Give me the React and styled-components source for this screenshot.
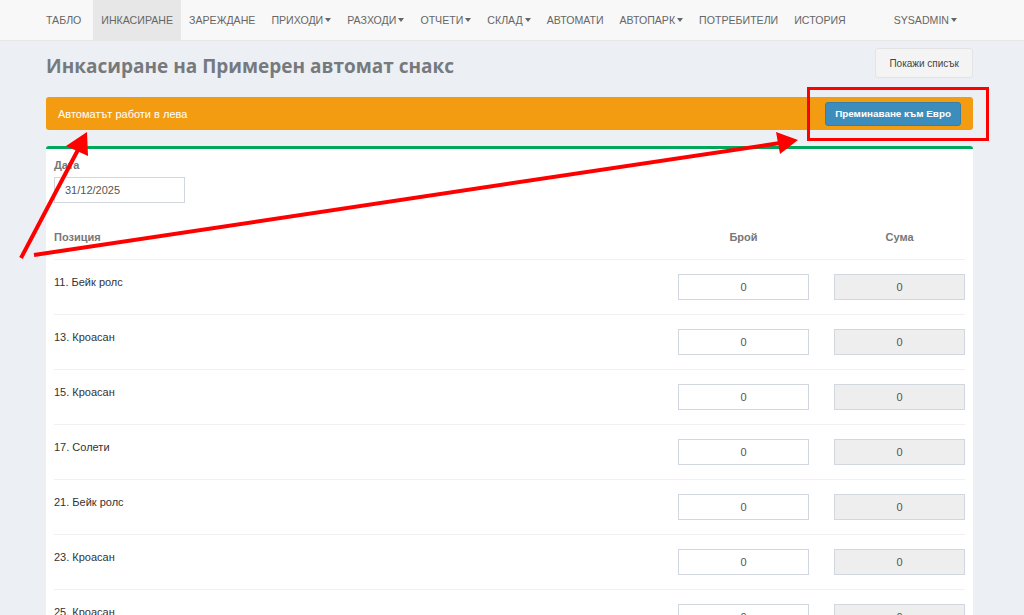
import React from "react";
import styled, { createGlobalStyle } from "styled-components";

const GlobalStyle = createGlobalStyle`
  html, body {
    margin: 0;
    padding: 0;
    background: #ecf0f5;
    font-family: "Liberation Sans", Arial, sans-serif;
    font-size: 11px;
    color: #333;
  }
  * { box-sizing: border-box; }
`;

const Page = styled.div`
  position: relative;
  height: 100vh;
  overflow: hidden;
  background: #ecf0f5;
`;

const Navbar = styled.nav`
  height: 41px;
  background: #f8f8f8;
  border-bottom: 1px solid #e7e7e7;
  display: flex;
  align-items: stretch;
  justify-content: space-between;
  padding: 0 59px 0 38px;
`;

const NavGroup = styled.ul`
  display: flex;
  align-items: stretch;
  list-style: none;
  margin: 0;
  padding: 0;
`;

const NavItem = styled.li`
  display: flex;
  align-items: center;
  padding: 0 8px;
  font-size: 10.6px;
  text-transform: uppercase;
  color: #666;
  background: ${(p) => (p.$active ? "#e7e7e7" : "transparent")};
  margin-right: ${(p) => (p.$wide ? "4px" : "0")};
  white-space: nowrap;
  cursor: pointer;
`;

const Caret = styled.span`
  display: inline-block;
  width: 0;
  height: 0;
  margin-left: 2px;
  border-top: 4px solid #666;
  border-left: 3.5px solid transparent;
  border-right: 3.5px solid transparent;
`;

const Content = styled.main`
  padding: 7px 51px 0 46px;
`;

const HeaderRow = styled.div`
  display: flex;
  justify-content: space-between;
  align-items: flex-start;
`;

const Title = styled.h1`
  margin: 7px 0 0;
  font-family: "Open Sans", "Liberation Sans", sans-serif;
  font-weight: 700;
  font-size: 19px;
  line-height: 23px;
  color: #777a7d;
`;

const DefaultButton = styled.button`
  height: 30px;
  padding: 0 13px;
  background: #f4f4f4;
  border: 1px solid #e3e3e3;
  border-radius: 3px;
  color: #444;
  font-family: "Liberation Sans", Arial, sans-serif;
  font-size: 10px;
`;

const Alert = styled.div`
  margin-top: 19px;
  height: 33px;
  background: #f39c12;
  border-radius: 3px;
  display: flex;
  align-items: center;
  justify-content: space-between;
  padding: 0 12px;
  color: #fff;
  font-size: 11px;
`;

const PrimaryButton = styled.button`
  height: 24px;
  padding: 0 9px;
  background: #3c8dbc;
  border: 1px solid #367fa9;
  border-radius: 3px;
  color: #fff;
  font-family: "Liberation Sans", Arial, sans-serif;
  font-weight: 700;
  font-size: 9.9px;
`;

const Box = styled.section`
  margin-top: 16px;
  background: #fff;
  border-top: 3px solid #00a65a;
  border-radius: 3px;
  padding: 8px 8px 0;
`;

const Label = styled.label`
  display: block;
  font-weight: 700;
  font-size: 11px;
  line-height: 16px;
  color: #777;
  margin-bottom: 4px;
`;

const Field = styled.input`
  display: block;
  width: 131px;
  height: 26px;
  padding: 0 10px;
  border: 1px solid #d2d6de;
  border-radius: 0;
  font-family: "Liberation Sans", Arial, sans-serif;
  font-size: 11px;
  color: #555;
  text-align: ${(p) => (p.$center ? "center" : "left")};
  background: ${(p) => (p.readOnly ? "#eee" : "#fff")};
  outline: none;
`;

const Table = styled.div`
  margin-top: 18px;
`;

const Row = styled.div`
  display: grid;
  grid-template-columns: 1fr 131px 131px;
  column-gap: 25px;
  padding: ${(p) => (p.$head ? "8px 0 14px" : "14px 0")};
  border-top: ${(p) => (p.$head ? "none" : "1px solid #f1f1f1")};
`;

const HeadCell = styled.div`
  font-weight: 700;
  font-size: 11px;
  line-height: 16px;
  color: #777;
  text-align: ${(p) => (p.$center ? "center" : "left")};
`;

const NameCell = styled.div`
  font-size: 11px;
  line-height: 16px;
  color: #333;
`;

const Overlay = styled.svg`
  position: absolute;
  inset: 0;
  width: 100%;
  height: 100%;
  pointer-events: none;
`;

const navLeft = [
  { label: "Табло", wide: true },
  { label: "Инкасиране", active: true },
  { label: "Зареждане" },
  { label: "Приходи", menu: true },
  { label: "Разходи", menu: true },
  { label: "Отчети", menu: true },
  { label: "Склад", menu: true },
  { label: "Автомати" },
  { label: "Автопарк", menu: true },
  { label: "Потребители" },
  { label: "История" },
];

const products = [
  "11. Бейк ролс",
  "13. Кроасан",
  "15. Кроасан",
  "17. Солети",
  "21. Бейк ролс",
  "23. Кроасан",
  "25. Кроасан",
  "27. Солети",
];

export default function App() {
  return (
    <Page>
      <GlobalStyle />
      <Navbar>
        <NavGroup>
          {navLeft.map((item) => (
            <NavItem key={item.label} $active={item.active} $wide={item.wide}>
              {item.label}
              {item.menu && <Caret />}
            </NavItem>
          ))}
        </NavGroup>
        <NavGroup>
          <NavItem>
            sysadmin
            <Caret />
          </NavItem>
        </NavGroup>
      </Navbar>

      <Content>
        <HeaderRow>
          <Title>Инкасиране на Примерен автомат снакс</Title>
          <DefaultButton>Покажи списък</DefaultButton>
        </HeaderRow>

        <Alert>
          <span>Автоматът работи в лева</span>
          <PrimaryButton>Преминаване към Евро</PrimaryButton>
        </Alert>

        <Box>
          <Label>Дата</Label>
          <Field defaultValue="31/12/2025" />

          <Table>
            <Row $head>
              <HeadCell>Позиция</HeadCell>
              <HeadCell $center>Брой</HeadCell>
              <HeadCell $center>Сума</HeadCell>
            </Row>
            {products.map((name, i) => (
              <Row key={i}>
                <NameCell>{name}</NameCell>
                <Field $center defaultValue="0" />
                <Field $center readOnly value="0" />
              </Row>
            ))}
          </Table>
        </Box>
      </Content>

      <Overlay viewBox="0 0 1024 615" preserveAspectRatio="none">
        <rect x="808.5" y="88.5" width="179" height="51" fill="none" stroke="#ff0000" strokeWidth="3" />
        <line x1="21" y1="258" x2="80" y2="146" stroke="#ff0000" strokeWidth="4" />
        <polygon points="87,132 66,146 88,156" fill="#ff0000" />
        <line x1="34" y1="255" x2="780" y2="143" stroke="#ff0000" strokeWidth="4" />
        <polygon points="798,140 776,132 780,154" fill="#ff0000" />
      </Overlay>
    </Page>
  );
}
